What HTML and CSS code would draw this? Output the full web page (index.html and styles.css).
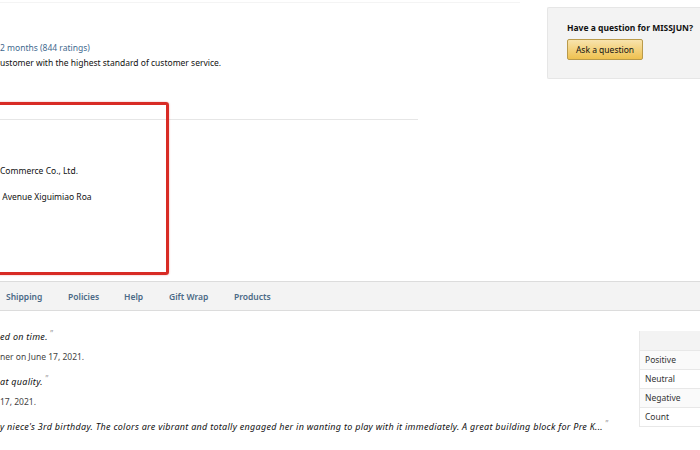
FILE: index.html
```html
<!DOCTYPE html>
<html>
<head>
<meta charset="utf-8">
<link rel="stylesheet" href="styles.css">
</head>
<body>
<div class="page">
  <div class="top">
    <div class="main-col">
      <div class="topline"></div>
      <p class="rating"><a class="link">2 months (844 ratings)</a></p>
      <p class="desc">ustomer with the highest standard of customer service.</p>
      <div class="divider"></div>
      <div class="address">
        <p class="addr-line">Commerce Co., Ltd.</p>
        <p class="addr-line addr-2">&nbsp;Avenue Xiguimiao Roa</p>
      </div>
    </div>
    <aside class="question">
      <p class="q-title">Have a question for MISSJUN?</p>
      <button class="ask-btn">Ask a question</button>
    </aside>
    <div class="highlight"></div>
  </div>
  <nav class="tabs">
    <span class="tab">Shipping</span>
    <span class="tab">Policies</span>
    <span class="tab">Help</span>
    <span class="tab">Gift Wrap</span>
    <span class="tab">Products</span>
  </nav>
  <div class="bottom">
    <div class="reviews">
      <div class="review">
        <p class="quote">ed on time. <span class="qm">”</span></p>
        <p class="meta">ner on June 17, 2021.</p>
      </div>
      <div class="review">
        <p class="quote">at quality. <span class="qm">”</span></p>
        <p class="meta">17, 2021.</p>
      </div>
      <div class="review">
        <p class="quote">y niece's 3rd birthday. The colors are vibrant and totally engaged her in wanting to play with it immediately. A great building block for Pre K... <span class="qm">”</span></p>
      </div>
    </div>
    <table class="stats">
      <tr class="head"><td></td></tr>
      <tr class="alt"><td>Positive</td></tr>
      <tr><td>Neutral</td></tr>
      <tr class="alt"><td>Negative</td></tr>
      <tr><td>Count</td></tr>
    </table>
  </div>
</div>
</body>
</html>
```
FILE: styles.css
```css
html, body {
  margin: 0;
  padding: 0;
  background: #fff;
}
body {
  font-family: "Noto Sans", "Open Sans", Arial, sans-serif;
  font-size: 8.5px;
  color: #111;
  width: 700px;
  height: 450px;
  overflow: hidden;
}
p { margin: 0; }

.page { position: relative; }

.top {
  position: relative;
  display: flex;
  height: 281px;
}
.main-col {
  flex: 1;
}
.topline {
  height: 1px;
  width: 520px;
  margin-top: 2px;
  background: #f4f4f4;
}
.rating {
  margin-top: 38px;
  line-height: 14px;
}
.link { color: #3f6a8f; }
.desc {
  line-height: 14px;
  margin-top: 1px;
}
.divider {
  margin-top: 49px;
  width: 418px;
  height: 1px;
  background: #e6e6e6;
}
.address { padding-top: 44px; }
.addr-line { line-height: 14px; }
.addr-2 { margin-top: 12px; }

.question {
  align-self: flex-start;
  margin-top: 7px;
  width: 153px;
  height: 72px;
  box-sizing: border-box;
  background: #f3f3f3;
  border: 1px solid #e6e6e6;
  border-right: none;
  border-radius: 2px 0 0 2px;
  padding: 14px 0 0 19px;
}
.q-title {
  font-weight: 700;
  font-size: 8.5px;
  line-height: 12px;
  white-space: nowrap;
}
.ask-btn {
  margin-top: 5px;
  width: 76px;
  height: 21px;
  font-family: inherit;
  font-size: 8.5px;
  color: #111;
  background: linear-gradient(#f8e3ad, #eec14f);
  border: 1px solid #b99a4a;
  border-radius: 2px;
  padding: 0;
}

.highlight {
  position: absolute;
  left: -10px;
  top: 102px;
  width: 173px;
  height: 167px;
  border: 3px solid #d82b25;
  border-radius: 3px;
  box-shadow: 0 0 2px rgba(200, 30, 30, 0.4);
}

.tabs {
  display: flex;
  height: 28px;
  align-items: center;
  background: #f3f3f3;
  border-top: 1px solid #dcdcdc;
  border-bottom: 1px solid #dcdcdc;
  padding-left: 6px;
}
.tab {
  color: #4b6a86;
  font-weight: 600;
  font-size: 8.5px;
}
.tab:nth-child(1) { width: 62px; }
.tab:nth-child(2) { width: 56px; }
.tab:nth-child(3) { width: 45px; }
.tab:nth-child(4) { width: 65px; }

.bottom {
  display: flex;
  justify-content: space-between;
  align-items: flex-start;
}
.reviews {
  padding-top: 16px;
}
.review { margin-bottom: 8px; }
.quote {
  font-style: italic;
  font-size: 9px;
  letter-spacing: 0.28px;
  line-height: 14px;
  white-space: nowrap;
}
.qm {
  color: #999;
  font-style: normal;
  vertical-align: 3px;
  font-size: 8px;
}
.meta {
  margin-top: 6px;
  line-height: 14px;
  color: #444;
}

.stats {
  margin-top: 20px;
  width: 61px;
  border-collapse: collapse;
  border-left: 1px solid #e8e8e8;
}
.stats td {
  height: 18px;
  line-height: 18px;
  padding: 0 0 0 5px;
  border-bottom: 1px solid #e8e8e8;
  font-size: 8.5px;
  color: #333;
}
.stats .head td {
  height: 19px;
  background: #f3f3f3;
}
.stats .alt td { background: #fafafa; }
```
